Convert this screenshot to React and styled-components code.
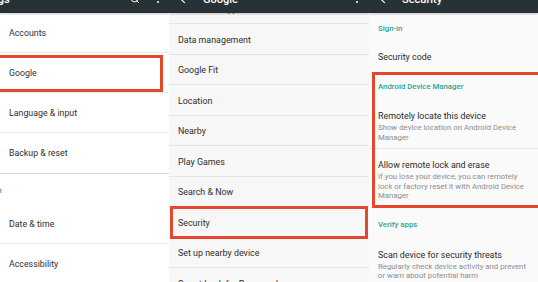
import React from "react";
import styled, { createGlobalStyle } from "styled-components";
import { Search, EllipsisVertical, ArrowLeft } from "lucide-react";

const GlobalStyle = createGlobalStyle`
  html, body {
    margin: 0;
    padding: 0;
    background: #fafafa;
  }
  body {
    font-family: Roboto, "Noto Sans", sans-serif;
    overflow: hidden;
  }
`;

const Screen = styled.div`
  display: grid;
  grid-template-columns: 169px 200px 1fr;
  width: 538px;
  height: 282px;
  overflow: hidden;
`;

const Panel = styled.div`
  display: flex;
  flex-direction: column;
  min-width: 0;
  overflow: hidden;
  background: ${(p) => p.$bg};
`;

const AppBar = styled.div`
  position: relative;
  z-index: 2;
  flex: 0 0 13px;
  background: #283135;
  box-shadow: 0 1px 2px rgba(0, 0, 0, 0.22);
  overflow: hidden;
`;

const BarRow = styled.div`
  display: flex;
  align-items: center;
  height: 28px;
  margin-top: -15px;
  padding: 0 ${(p) => p.$pr || 0}px 0 ${(p) => p.$pl || 0}px;
  color: #fff;
`;

const BarTitle = styled.div`
  flex: 1;
  margin-left: ${(p) => p.$ml || 0}px;
  font-size: 11px;
  font-weight: 500;
  white-space: nowrap;
`;

const BarIcon = styled.span`
  display: flex;
  margin-left: ${(p) => p.$ml || 0}px;
`;

/* settings panel (left) */
const Card = styled.div`
  background: #fff;
  border-bottom: 1px solid #d6d6d6;
  box-shadow: 0 1px 2px rgba(0, 0, 0, 0.08);
`;

const BigRow = styled.div`
  position: relative;
  display: flex;
  align-items: center;
  height: 40px;
  padding-left: 9px;
  font-size: 8.8px;
  color: #2e2e2e;
  box-sizing: border-box;
  border-bottom: 1px solid ${(p) => (p.$last ? "transparent" : "#ececec")};
  background-clip: padding-box;

  &::after {
    content: "";
    display: ${(p) => (p.$boxed ? "block" : "none")};
    position: absolute;
    top: 2px;
    bottom: 0;
    left: -4px;
    right: 6px;
    border: 3px solid #e5472d;
  }
`;

const Section = styled.div`
  background: #fff;
  flex: 1;
`;

const SectionLabel = styled.div`
  height: 30px;
  display: flex;
  align-items: center;
  padding-top: 3px;
  box-sizing: border-box;
  margin-left: -25px;
  font-size: 8px;
  font-weight: 500;
  color: #2aa594;
  white-space: nowrap;
`;

/* google panel (middle) */
const List = styled.div`
  margin-top: -19.5px;
`;

const MidRow = styled.div`
  position: relative;
  display: flex;
  align-items: center;
  height: 30.5px;
  box-sizing: border-box;
  padding: 2px 0 0 9px;
  font-size: 8.9px;
  color: #2e2e2e;
  border-bottom: 1px solid #e4e4e4;
  white-space: nowrap;

  &::after {
    content: "";
    display: ${(p) => (p.$boxed ? "block" : "none")};
    position: absolute;
    top: -1px;
    bottom: -2px;
    left: 1px;
    right: 1px;
    border: 3px solid #e5472d;
  }
`;

/* security panel (right) */
const Prefs = styled.div`
  display: flex;
  flex-direction: column;
`;

const Category = styled.div`
  height: ${(p) => p.$h || 30}px;
  display: flex;
  align-items: center;
  box-sizing: border-box;
  padding: ${(p) => p.$pt || 0}px 0 0 9px;
  font-size: 7.8px;
  font-weight: 500;
  color: #2aa594;
  white-space: nowrap;
`;

const Pref = styled.div`
  display: flex;
  flex-direction: column;
  padding: ${(p) => (p.$single ? "8px 0 8px 9px" : "10px 6px 6px 9px")};
  border-bottom: 1px solid ${(p) => (p.$line ? "#e8e8e8" : "transparent")};
`;

const PrefTitle = styled.div`
  font-size: 8.9px;
  line-height: 12px;
  color: #2b2b2b;
  white-space: nowrap;
`;

const PrefSummary = styled.div`
  margin-top: 1px;
  font-size: 7.8px;
  line-height: 9.5px;
  color: #8e8e8e;
`;

const Boxed = styled.div`
  position: relative;

  &::after {
    content: "";
    position: absolute;
    top: 0;
    bottom: 0;
    left: 3px;
    right: -6px;
    border: 3px solid #e5472d;
    pointer-events: none;
  }
`;

const settingsRows = ["Accounts", "Google", "Language & input", "Backup & reset"];
const googleRows = [
  "Connected apps",
  "Data management",
  "Google Fit",
  "Location",
  "Nearby",
  "Play Games",
  "Search & Now",
  "Security",
  "Set up nearby device",
  "Smart Lock for Passwords",
];

export default function App() {
  return (
    <>
      <GlobalStyle />
      <Screen>
        <Panel $bg="#fff">
          <AppBar>
            <BarRow $pr={6}>
              <BarTitle $ml={-31}>Settings</BarTitle>
              <BarIcon>
                <Search size={10} strokeWidth={2.4} />
              </BarIcon>
              <BarIcon $ml={13}>
                <EllipsisVertical size={10} strokeWidth={3} />
              </BarIcon>
            </BarRow>
          </AppBar>
          <Card>
            {settingsRows.map((r, i) => (
              <BigRow key={r} $boxed={r === "Google"} $last={i === settingsRows.length - 1}>
                {r}
              </BigRow>
            ))}
          </Card>
          <Section>
            <SectionLabel>System</SectionLabel>
            <BigRow>Date &amp; time</BigRow>
            <BigRow>Accessibility</BigRow>
          </Section>
        </Panel>

        <Panel $bg="#f7f7f7">
          <AppBar>
            <BarRow $pl={10} $pr={7}>
              <BarIcon>
                <ArrowLeft size={11} strokeWidth={2.4} />
              </BarIcon>
              <BarTitle $ml={13}>Google</BarTitle>
              <BarIcon>
                <EllipsisVertical size={10} strokeWidth={3} />
              </BarIcon>
            </BarRow>
          </AppBar>
          <List>
            {googleRows.map((r) => (
              <MidRow key={r} $boxed={r === "Security"}>
                {r}
              </MidRow>
            ))}
          </List>
        </Panel>

        <Panel $bg="#fafafa">
          <AppBar>
            <BarRow $pl={10}>
              <BarIcon>
                <ArrowLeft size={11} strokeWidth={2.4} />
              </BarIcon>
              <BarTitle $ml={12}>Security</BarTitle>
            </BarRow>
          </AppBar>
          <Prefs>
            <Category $h={30}>Sign-in</Category>
            <Pref $single>
              <PrefTitle>Security code</PrefTitle>
            </Pref>
            <Boxed>
              <Category $h={28}>Android Device Manager</Category>
              <Pref $line>
                <PrefTitle>Remotely locate this device</PrefTitle>
                <PrefSummary>Show device location on Android Device Manager</PrefSummary>
              </Pref>
              <Pref>
                <PrefTitle>Allow remote lock and erase</PrefTitle>
                <PrefSummary>
                  If you lose your device, you can remotely lock or factory reset it with Android
                  Device Manager
                </PrefSummary>
              </Pref>
            </Boxed>
            <Category $h={31} $pt={2}>Verify apps</Category>
            <Pref>
              <PrefTitle>Scan device for security threats</PrefTitle>
              <PrefSummary>
                Regularly check device activity and prevent or warn about potential harm
              </PrefSummary>
            </Pref>
          </Prefs>
        </Panel>
      </Screen>
    </>
  );
}
